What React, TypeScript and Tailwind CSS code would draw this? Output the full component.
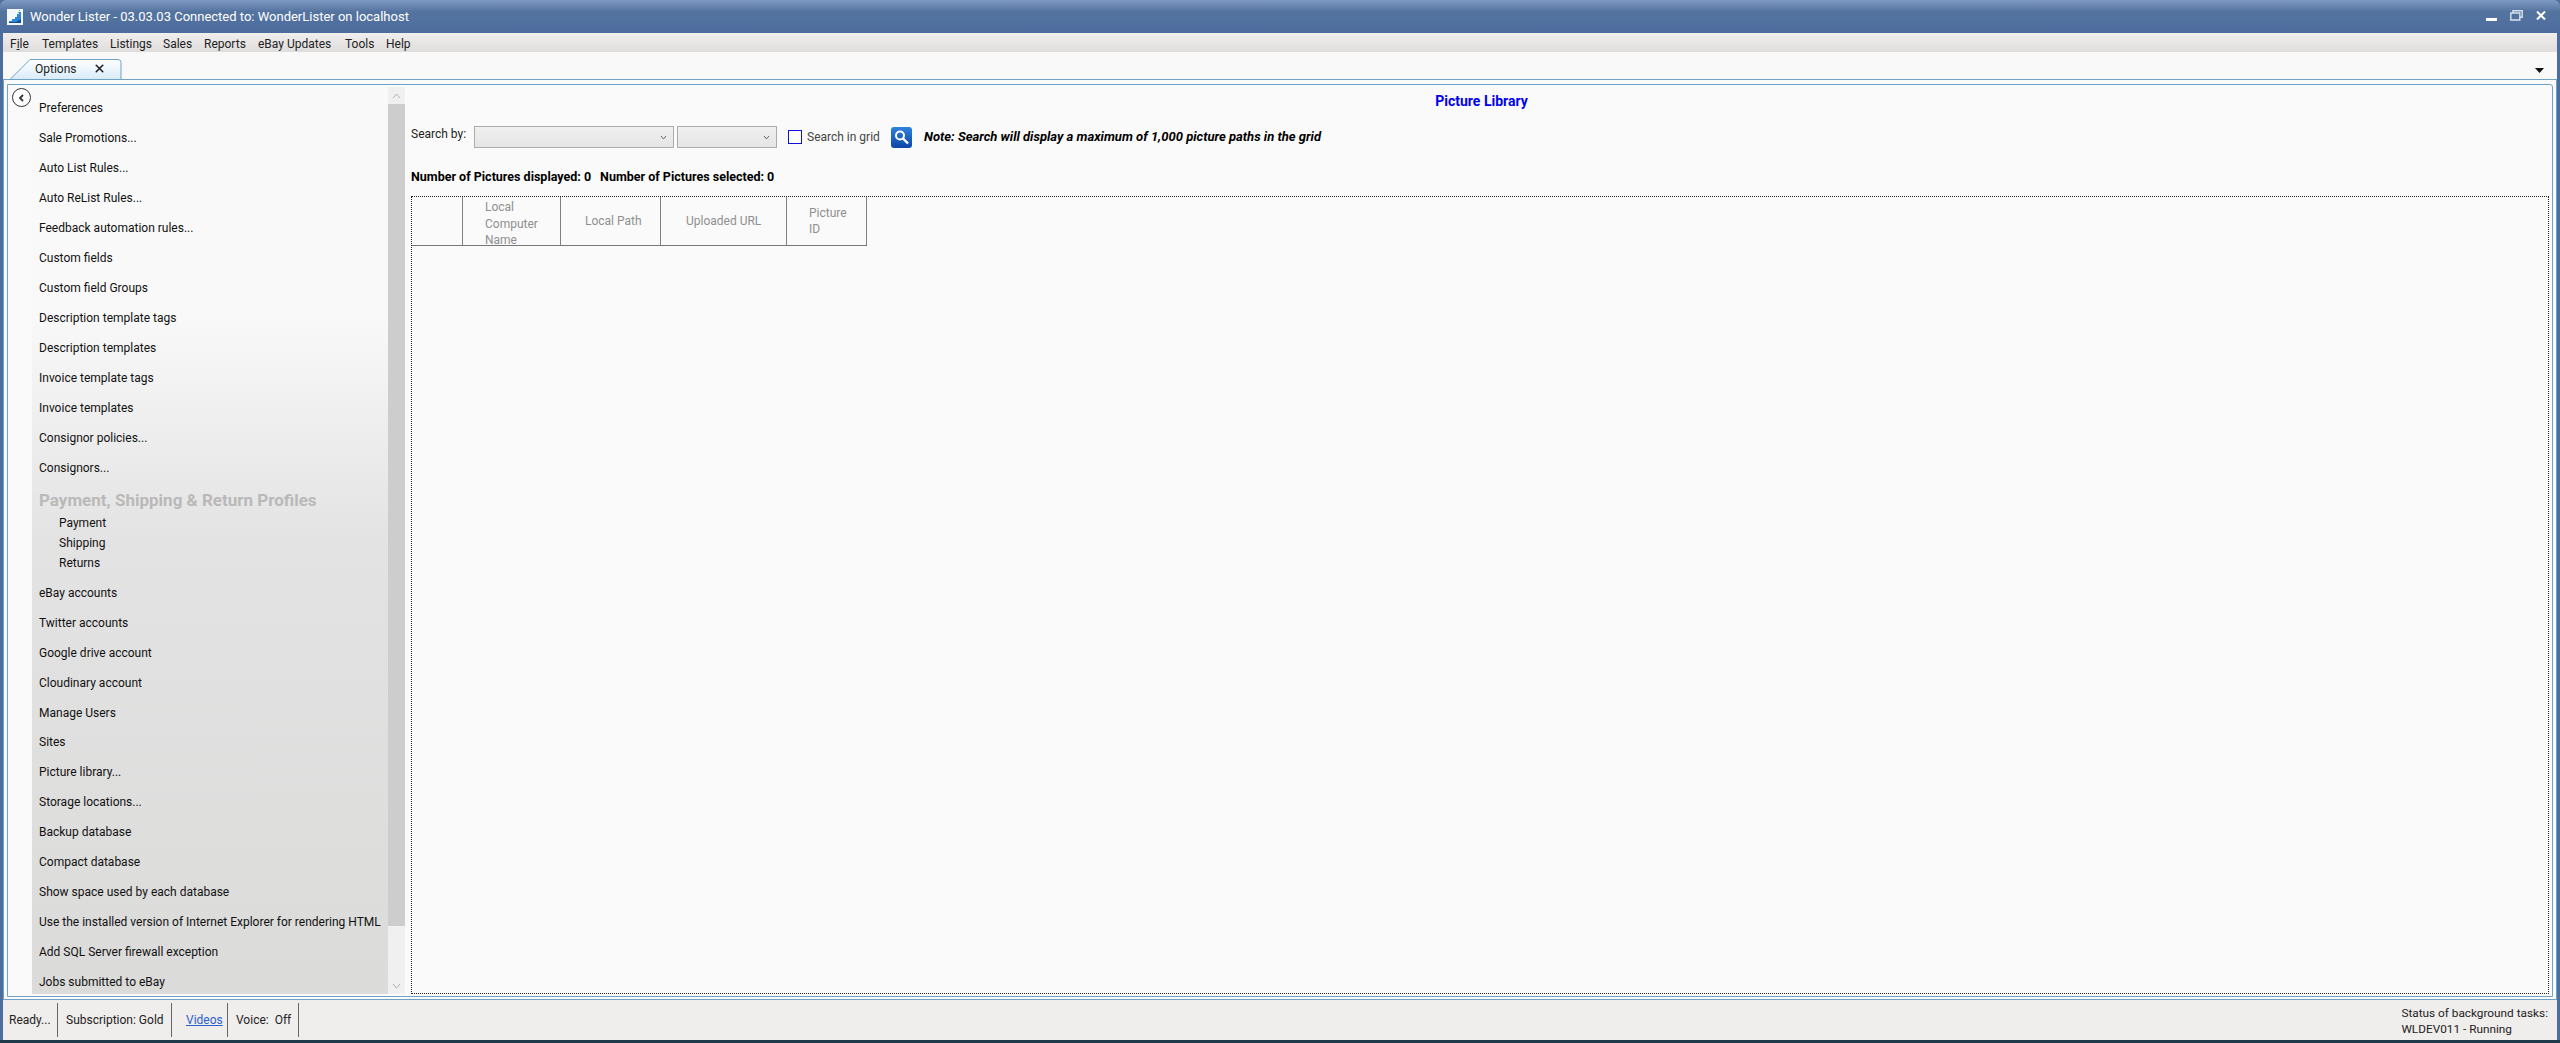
import { X } from "lucide-react";

const font = { fontFamily: 'Roboto, "Noto Sans", sans-serif' };

const menus = [
  { label: "File", width: "w-[32px]" },
  { label: "Templates", width: "w-[68px]" },
  { label: "Listings", width: "w-[53px]" },
  { label: "Sales", width: "w-[41px]" },
  { label: "Reports", width: "w-[54px]" },
  { label: "eBay Updates", width: "w-[87px]" },
  { label: "Tools", width: "w-[41px]" },
  { label: "Help", width: "w-[40px]" },
];

const topOptions = [
  "Preferences",
  "Sale Promotions...",
  "Auto List Rules...",
  "Auto ReList Rules...",
  "Feedback automation rules...",
  "Custom fields",
  "Custom field Groups",
  "Description template tags",
  "Description templates",
  "Invoice template tags",
  "Invoice templates",
  "Consignor policies...",
  "Consignors...",
];

const bottomOptions = [
  "eBay accounts",
  "Twitter accounts",
  "Google drive account",
  "Cloudinary account",
  "Manage Users",
  "Sites",
  "Picture library...",
  "Storage locations...",
  "Backup database",
  "Compact database",
  "Show space used by each database",
  "Use the installed version of Internet Explorer for rendering HTML",
  "Add SQL Server firewall exception",
  "Jobs submitted to eBay",
];

function AppIcon() {
  return (
    <svg width="16" height="16" viewBox="0 0 16 16" className="shrink-0">
      <rect width="16" height="16" fill="#f4f7fb" />
      <path d="M2 14v-2h3v-2h3V8h2V5h2V3h2v11z" fill="#2f86d6" />
      <path d="M2 14v-1h7l5-3v4z" fill="#12509c" />
      <rect x="11" y="3" width="1" height="1" fill="#4caf50" />
      <rect x="12" y="1" width="1" height="1" fill="#4caf50" />
    </svg>
  );
}

function Sidebar() {
  return (
    <div className="flex h-full w-[397px] shrink-0">
      <div className="w-[24px] shrink-0 pl-[4px] pt-[1px]">
        <div className="flex h-[19px] w-[19px] items-center justify-center rounded-full border border-[#333] bg-white">
          <svg width="7" height="8" viewBox="0 0 7 8">
            <path d="M5 1 2 4l3 3" fill="none" stroke="#333" strokeWidth="1.8" />
          </svg>
        </div>
      </div>
      <div className="flex w-[356px] shrink-0 flex-col overflow-hidden bg-linear-to-b from-[#f9f9f9] from-[25%] via-[#e4e3e3] via-[50%] to-[#dbdbda] pl-[7px] pt-[6px] text-[12px] text-[#111]">
        {topOptions.map((item) => (
          <div key={item} className="flex h-[30px] shrink-0 items-center whitespace-nowrap">
            {item}
          </div>
        ))}
        <div className="mt-[5px] flex h-[25px] shrink-0 items-center whitespace-nowrap text-[17px] font-bold text-[#b9b9b9]">
          Payment, Shipping &amp; Return Profiles
        </div>
        <div className="mb-[5px] flex shrink-0 flex-col pl-[20px]">
          <div className="flex h-[20px] items-center">Payment</div>
          <div className="flex h-[20px] items-center">Shipping</div>
          <div className="flex h-[20px] items-center">Returns</div>
        </div>
        {bottomOptions.map((item) => (
          <div key={item} className="flex h-[29.92px] shrink-0 items-center whitespace-nowrap">
            {item}
          </div>
        ))}
      </div>
      <div className="flex w-[17px] shrink-0 flex-col bg-[#f0f0f0]">
        <div className="flex h-[17px] items-center justify-center">
          <svg width="9" height="6" viewBox="0 0 9 6">
            <path d="M1 5l3.5-4L8 5" fill="none" stroke="#b0b0b0" />
          </svg>
        </div>
        <div className="h-[822px] bg-[#cdcdcd]" />
        <div className="flex-1" />
        <div className="flex h-[17px] items-center justify-center">
          <svg width="9" height="6" viewBox="0 0 9 6">
            <path d="M1 1l3.5 4L8 1" fill="none" stroke="#b0b0b0" />
          </svg>
        </div>
      </div>
    </div>
  );
}

function Combo({ width }: { width: string }) {
  return (
    <div className={`flex h-[22px] shrink-0 items-center justify-end border border-[#acacac] bg-linear-to-b from-[#f0f0f0] to-[#e5e5e5] pr-[6px] ${width}`}>
      <svg width="7" height="5" viewBox="0 0 7 5">
        <path d="M1 1l2.5 3L6 1" fill="none" stroke="#666" />
      </svg>
    </div>
  );
}

function SearchButton() {
  return (
    <div className="flex h-[21px] w-[21px] items-center justify-center rounded-[3px] bg-linear-to-b from-[#2f82dc] to-[#0e46a6]">
      <svg width="17" height="17" viewBox="0 0 17 17">
        <circle cx="7" cy="6.5" r="4" fill="none" stroke="#fff" strokeWidth="2" />
        <path d="M10 9.5l5 5" stroke="#fff" strokeWidth="2.4" />
      </svg>
    </div>
  );
}

function PictureGrid() {
  const cell = "h-full shrink-0 border-r border-[#808080] text-[#8f8f8f]";
  return (
    <div className="mr-[3px] flex-1 border border-dotted border-[#222] leading-[16px]">
      <div className="flex h-[49px] w-fit overflow-hidden border-b border-[#777]">
        <div className={`${cell} w-[51px]`} />
        <div className={`${cell} w-[98px] pl-[22px] pr-[10px] pt-[2px] leading-[16.5px]`}>Local Computer Name</div>
        <div className={`${cell} flex w-[100px] items-center pl-[24px]`}>Local Path</div>
        <div className={`${cell} flex w-[126px] items-center pl-[25px]`}>Uploaded URL</div>
        <div className={`${cell} flex w-[80px] items-center pl-[22px] pr-[20px]`}>Picture ID</div>
      </div>
    </div>
  );
}

function PictureLibrary() {
  return (
    <div className="flex min-w-0 flex-1 flex-col pl-[6px] text-[12px]">
      <div className="flex h-[28px] items-center justify-center text-[14px] font-bold text-[#0000f0]">
        Picture Library
      </div>
      <div className="mt-[10px] flex h-[24px] items-center">
        <span className="-mt-[7px] w-[63px] shrink-0 text-[#222]">Search by:</span>
        <Combo width="w-[200px]" />
        <div className="w-[3px] shrink-0" />
        <Combo width="w-[100px]" />
        <div className="ml-[11px] h-[14px] w-[14px] shrink-0 border border-[#1010e0] bg-white" />
        <span className="ml-[5px] w-[73px] shrink-0 text-[#444]">Search in grid</span>
        <div className="ml-[11px]">
          <SearchButton />
        </div>
        <span className="ml-[12px] text-[13px] font-bold italic text-black">
          Note: Search will display a maximum of 1,000 picture paths in the grid
        </span>
      </div>
      <div className="mt-[18px] flex h-[20px] items-center gap-[9px] text-[12.5px] font-bold text-black">
        <span>Number of Pictures displayed: 0</span>
        <span>Number of Pictures selected: 0</span>
      </div>
      <div className="h-[9px] shrink-0" />
      <PictureGrid />
    </div>
  );
}

export default function App() {
  return (
    <div className="flex h-[1043px] w-[2560px] flex-col overflow-hidden bg-[#4d6d9f]" style={font}>
      {/* title bar */}
      <div className="flex h-[33px] shrink-0 items-center rounded-t-[6px] bg-linear-to-b from-[#7f9ac4] via-[#54749f] via-[35%] to-[#4d6c9e] pl-[7px] pr-[14px] text-[13px] text-white">
        <AppIcon />
        <span className="ml-[7px]">Wonder Lister - 03.03.03 Connected to: WonderLister on localhost</span>
        <div className="ml-auto flex items-center">
          <div className="mt-[6px] h-[3px] w-[11px] bg-white" />
          <svg width="13" height="11" viewBox="0 0 13 11" className="ml-[13px] -mt-[3px]">
            <path d="M3 2.5V.8h9.2v6.5h-2M.8 3h9v7H.8z" fill="none" stroke="#d8e2f0" strokeWidth="1.4" />
          </svg>
          <svg width="10" height="9" viewBox="0 0 10 9" className="ml-[13px] -mt-[3px]">
            <path d="M1 .5l8 8M9 .5l-8 8" stroke="#fff" strokeWidth="2" />
          </svg>
        </div>
      </div>

      <div className="flex min-h-0 flex-1 flex-col pl-[3px] pr-[3px]">
        {/* menu bar */}
        <div className="flex h-[19px] shrink-0 items-center bg-linear-to-b from-[#f0efee] to-[#dedddc] pl-[7px] pt-[2px] text-[12px] text-[#222]">
          {menus.map((menu) => (
            <span key={menu.label} className={menu.width}>
              {menu.label === "File" ? <>F<span className="underline">i</span>le</> : menu.label}
            </span>
          ))}
        </div>

        {/* tab strip */}
        <div className="flex h-[27px] shrink-0 items-end justify-between bg-[#f9f9f9] pl-[7px] pr-[13px]">
          <div className="relative flex h-[20px] w-[112px] items-center pl-[25px] text-[12px] text-[#222]">
            <svg width="112" height="20" viewBox="0 0 112 20" className="absolute left-0 top-0">
              <defs>
                <linearGradient id="tabFill" x1="0" y1="0" x2="0" y2="1">
                  <stop offset="0" stopColor="#ffffff" />
                  <stop offset="1" stopColor="#d9ecfa" />
                </linearGradient>
              </defs>
              <path d="M.5 20 20 .5h88q3 0 3 3V20" fill="url(#tabFill)" stroke="#6fa3c4" />
            </svg>
            <span className="relative w-[58px]">Options</span>
            <X size={13} strokeWidth={3} className="relative -mt-[2px] text-[#222]" />
          </div>
          <svg width="9" height="5" viewBox="0 0 9 5" className="mb-[6px]">
            <path d="M0 0h9L4.5 5z" fill="#111" />
          </svg>
        </div>

        {/* content frame */}
        <div className="flex min-h-0 flex-1 flex-col border border-[#6fa3c4] bg-[#fafafa] px-[3px] pb-[2px] pt-[4px]">
          <div className="flex min-h-0 flex-1 rounded-tr-[3px] border border-[#6fa3c4] bg-[#fafafa] py-[2px]">
            <Sidebar />
            <PictureLibrary />
          </div>
        </div>

        {/* status bar */}
        <div className="flex h-[40px] shrink-0 items-center bg-[#f0eded] text-[12px] text-[#222]">
          <div className="flex h-[34px] w-[55px] shrink-0 items-center border-r border-[#666] pl-[6px]">Ready...</div>
          <div className="flex h-[34px] w-[114px] shrink-0 items-center border-r border-[#666] pl-[8px]">Subscription: Gold</div>
          <div className="flex h-[34px] w-[56px] shrink-0 items-center border-r border-[#666] pl-[14px] text-[#2a62c8] underline">Videos</div>
          <div className="flex h-[34px] w-[71px] shrink-0 items-center border-r border-[#666] pl-[8px]">Voice:&nbsp; Off</div>
          <div className="ml-auto flex flex-col pr-[9px] pt-[2px] text-[11.8px] leading-[16px]">
            <span>Status of background tasks:</span>
            <span>WLDEV011 - Running</span>
          </div>
        </div>
      </div>
      <div className="h-[3px] shrink-0 bg-[#1f3a4a]" />
    </div>
  );
}
